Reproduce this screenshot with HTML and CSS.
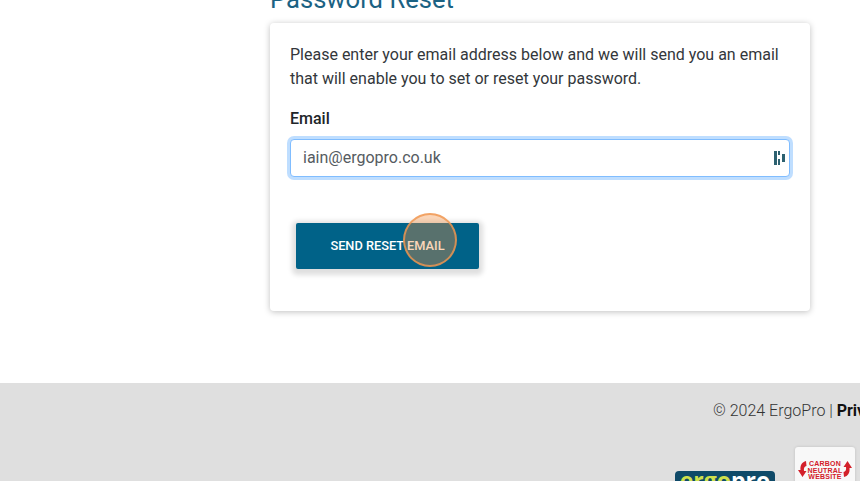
FILE: index.html
```html
<!DOCTYPE html>
<html lang="en">
<head>
<meta charset="utf-8">
<title>Password Reset</title>
<link rel="stylesheet" href="styles.css">
</head>
<body>
<div class="viewport">
  <main class="content">
    <h1 class="title">Password Reset</h1>
    <section class="card">
      <p class="intro">Please enter your email address below and we will send you an email that will enable you to set or reset your password.</p>
      <label class="label" for="email">Email</label>
      <div class="field">
        <input class="input" id="email" type="text" value="iain@ergopro.co.uk">
        <svg class="field-icon" width="12" height="14" viewBox="0 0 12 14" aria-hidden="true">
          <rect x="0" y="0" width="3" height="14" fill="#2d6170"/>
          <rect x="4" y="0" width="2" height="4" fill="#2d6170"/>
          <rect x="4" y="8" width="2" height="6" fill="#2d6170"/>
          <rect x="8" y="3" width="3" height="8" fill="#2d6170"/>
        </svg>
      </div>
      <div class="button-wrap">
        <button class="button" type="button">SEND RESET EMAIL</button>
        <span class="click-marker"></span>
      </div>
    </section>
  </main>
  <footer class="footer">
    <p class="copyright">© 2024 ErgoPro | <strong class="privacy">Privacy Policy</strong></p>
    <div class="logos">
      <div class="ergo-logo"><span class="ergo">ergo</span><span class="pro">pro</span></div>
      <div class="carbon-badge">
        <svg class="arrow" width="9" height="17" viewBox="0 0 9 17" aria-hidden="true"><path d="M8 0C4 1 2 4 2.500 9L0 9 4.500 16 8.500 10 6 10C5.500 7 6.500 5.500 8.500 5Z" fill="#d3202a"/></svg>
        <span class="carbon-text">CARBON<br>NEUTRAL<br>WEBSITE</span>
        <svg class="arrow" width="9" height="17" viewBox="0 0 9 17" aria-hidden="true"><path d="M1 16C5 15 7 12 6.500 7L9 7 4.500 0 .5 6 3 6C3.500 9 2.500 10.500 .5 11Z" fill="#d3202a"/></svg>
      </div>
    </div>
  </footer>
</div>
</body>
</html>
```
FILE: styles.css
```css
* { box-sizing: border-box; }
html, body { margin: 0; padding: 0; height: 100%; overflow: hidden; background: #fff; }
body { font-family: Roboto, "Liberation Sans", sans-serif; color: #212529; }
.viewport { height: 481px; overflow: hidden; display: flex; flex-direction: column; }
.content { width: 540px; margin: -17px 0 0 270px; flex: none; }
.title { margin: 0 0 8px; font-size: 25.6px; line-height: 32px; font-weight: 400; color: #1b6283; }
.card { height: 288px; padding: 20px; background: #fff; border-radius: 4px; box-shadow: 0 1px 6px rgba(0,0,0,0.25); }
.intro { margin: 0 0 16px; font-size: 16px; line-height: 24px; color: #33373b; }
.label { display: block; font-size: 16px; line-height: 24px; font-weight: 500; color: #212529; margin-bottom: 8px; }
.field { position: relative; height: 38px; }
.input { width: 100%; height: 38px; padding: 0 36px 2px 12px; font: 400 16px Roboto, sans-serif; color: #555b61; background: #fff; border: 1px solid #80bdff; border-radius: 4px; box-shadow: 0 0 0 3px rgba(0,123,255,0.25); outline: none; }
.field-icon { position: absolute; right: 4px; top: 12px; }
.button-wrap { position: relative; margin: 46px 0 0 6px; width: 183px; }
.button { display: block; width: 183px; height: 46px; border: 0; border-radius: 2px; background: #006288; color: #fff; font: 500 12.8px Roboto, sans-serif; box-shadow: 0 2px 5px 4px rgba(0,0,0,0.13); padding: 0 0 2px; }
.click-marker { position: absolute; left: 107px; top: -10px; width: 54px; height: 54px; border-radius: 50%; background: rgba(244,140,60,0.36); border: 2px solid rgba(240,150,80,0.8); }
.footer { margin-top: 72px; flex: 1; background: #dfdfdf; min-width: 0; position: relative; }
.copyright { margin: 18px 0 0 713px; font-size: 16px; line-height: 19px; font-weight: 300; color: #333; white-space: nowrap; }
.privacy { font-weight: 700; color: #111; }
.logos { display: flex; align-items: flex-start; gap: 20px; margin: 27px 0 0 675px; width: 180px; }
.ergo-logo { width: 100px; height: 40px; margin-top: 24px; background: #0f4a68; border-radius: 4px; text-align: center; font: 700 23px/19px "Open Sans", sans-serif; flex: none; }
.ergo { color: #cfe04c; }
.pro { color: #fff; }
.carbon-badge { width: 60px; height: 50px; background: #f8f8f8; border-radius: 3px; box-shadow: 0 0 3px rgba(0,0,0,0.15); display: flex; justify-content: center; align-items: flex-start; gap: 1px; padding-top: 14px; flex: none; }
.carbon-text { font: 700 7px/6.5px "Liberation Sans", sans-serif; letter-spacing: 0.2px; color: #d3202a; text-align: center; }
```
